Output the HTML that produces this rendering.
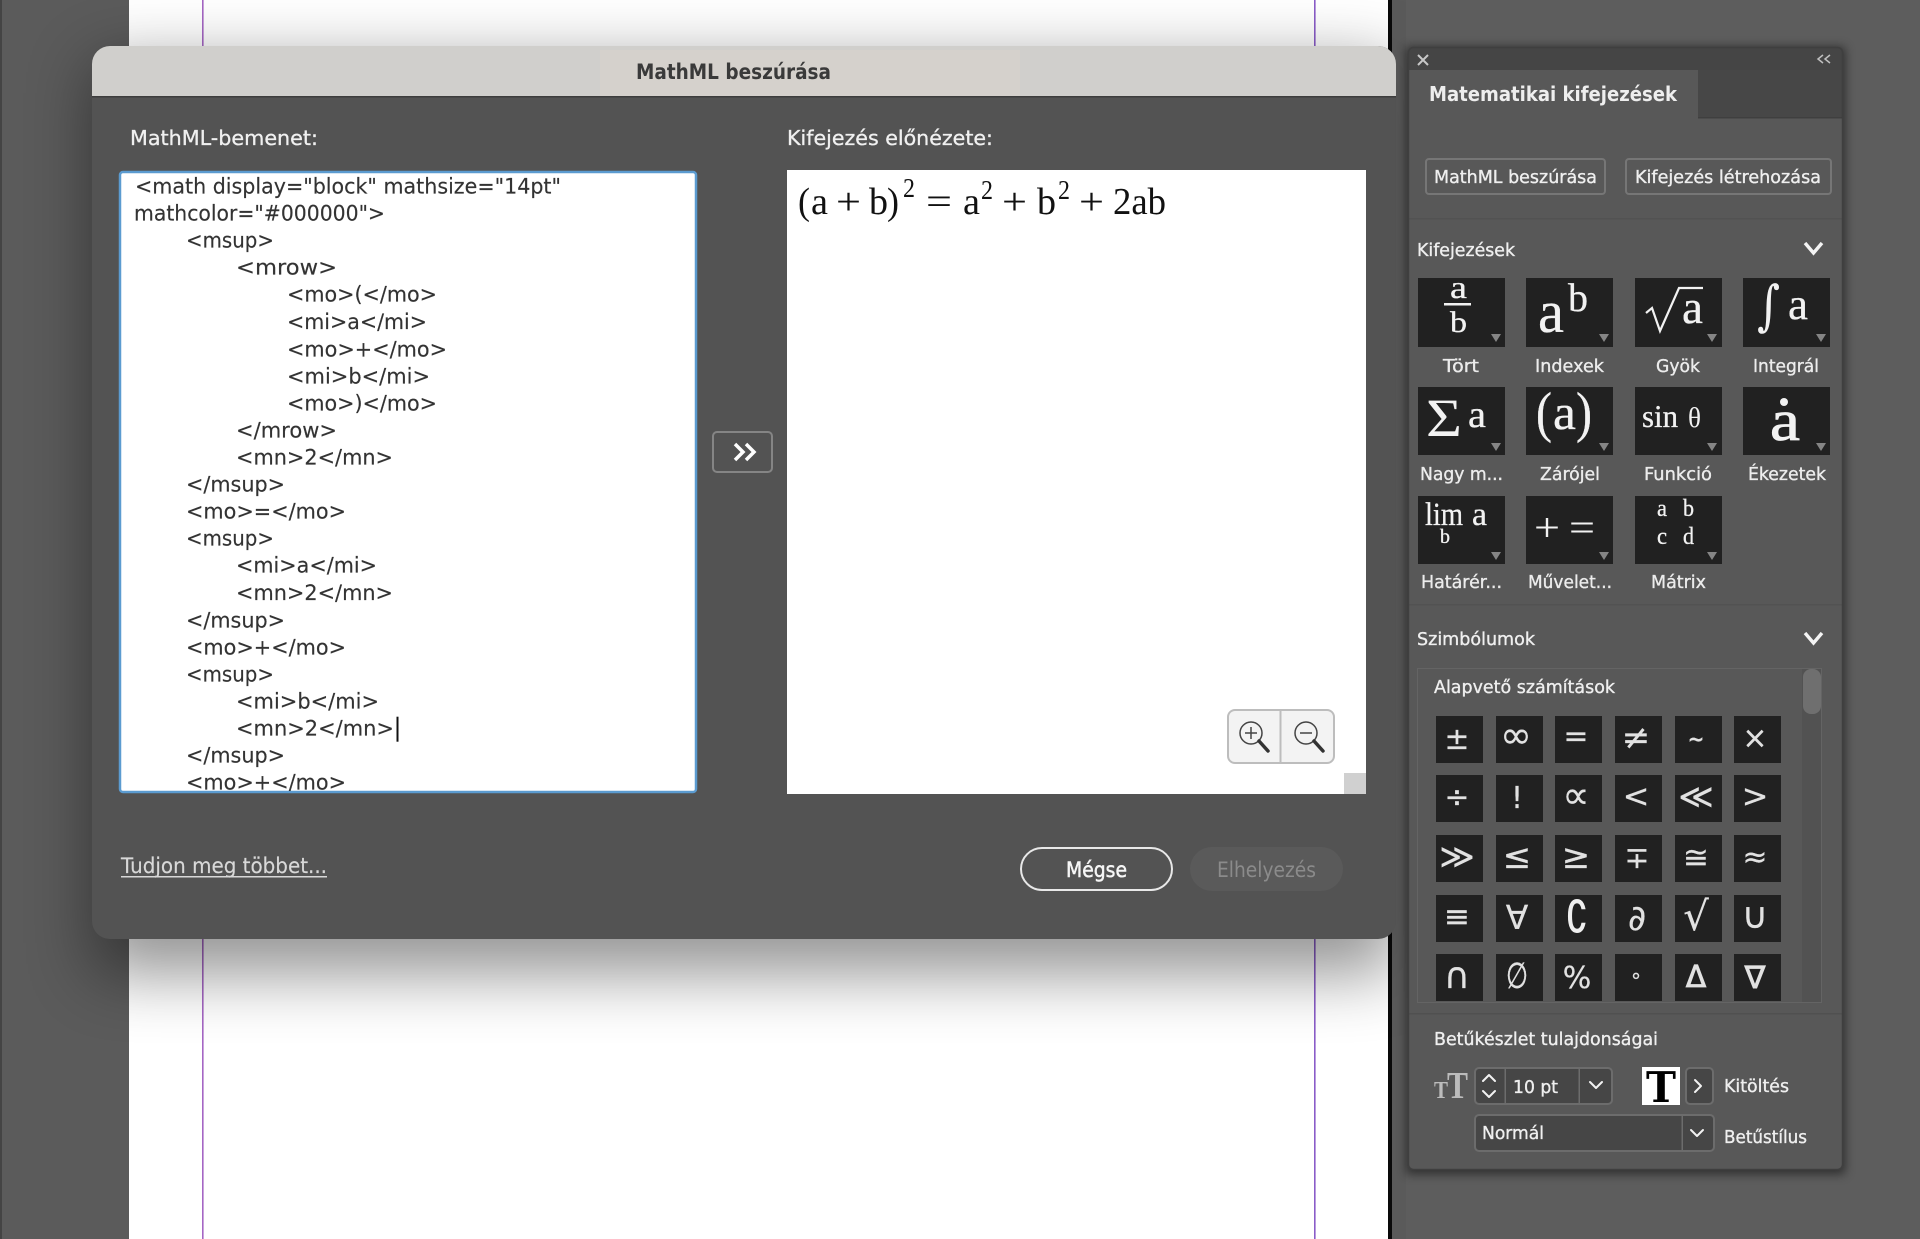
<!DOCTYPE html>
<html lang="hu"><head><meta charset="utf-8"><title>MathML beszúrása</title>
<style>
html,body{margin:0;padding:0;background:#5c5c5c;width:1920px;height:1239px;overflow:hidden}
svg{display:block}
text{font-family:"DejaVu Sans","Liberation Sans",sans-serif;white-space:pre}
.c{fill:#333;font-size:21px;stroke:#333;stroke-width:.15px}
.l{fill:#ececec;font-size:18px;stroke:#ececec;stroke-width:.35px}
.p{fill:#efefef;font-size:18px;stroke:#efefef;stroke-width:.35px}
.m{fill:#111;font-family:"Liberation Serif",serif;font-size:38px}
.w{fill:#f2f2f2;font-family:"Liberation Serif",serif;stroke:#f2f2f2;stroke-width:.3px}
.y{fill:#e2e2e2;font-size:30px;text-anchor:middle;stroke:#e2e2e2;stroke-width:.2px}
.ch{fill:none;stroke:#f2f2f2;stroke-width:2;stroke-linecap:round;stroke-linejoin:round}
.h{font-size:20px;fill:#f0f0f0;stroke:#f0f0f0;stroke-width:.3px}
</style></head><body>
<svg width="1920" height="1239" viewBox="0 0 1920 1239" xmlns="http://www.w3.org/2000/svg">
<defs>
<filter id="b1" x="-20%" y="-20%" width="140%" height="140%"><feGaussianBlur stdDeviation="33"/></filter>
<filter id="b2" x="-20%" y="-20%" width="140%" height="140%"><feGaussianBlur stdDeviation="5"/></filter>
<clipPath id="ta"><rect x="121" y="173" width="574" height="618"/></clipPath>
<clipPath id="dlg"><rect x="92" y="46" width="1304" height="893" rx="18"/></clipPath>
<clipPath id="pn"><rect x="1408" y="47" width="435" height="1123" rx="5"/></clipPath>
</defs>
<!-- background -->
<rect width="1920" height="1239" fill="#5e5e5e"/>
<rect x="0" width="129" height="1239" fill="#5b5b5b"/>
<rect x="0" width="2" height="1239" fill="#444"/>
<rect x="129" width="1259" height="1239" fill="#fff"/>
<rect x="202" width="1.6" height="1239" fill="#a566c4"/>
<rect x="1314" width="1.6" height="1239" fill="#8a5cc8"/>
<rect x="1388" width="4" height="1239" fill="#0a0a0a"/>
<rect x="1392" width="14" height="1239" fill="#4f4f4f"/>
<!-- dialog shadow -->
<rect x="92" y="62" width="1304" height="912" fill="#000" opacity=".42" filter="url(#b1)"/>
<rect x="1392" width="528" height="1239" fill="#5e5e5e" opacity=".75"/>
<!-- dialog -->
<g clip-path="url(#dlg)">
<rect x="92" y="46" width="1304" height="893" fill="#535353"/>
<rect x="92" y="46" width="1304" height="50" fill="#d0cfcc"/>
<rect x="600" y="50" width="420" height="46" fill="#d5d1cc"/>
<rect x="92" y="96" width="1304" height="1.5" fill="#3d3d3d"/>
</g>
<text x="636" y="79" textLength="195" lengthAdjust="spacingAndGlyphs" style="font-size:21px;font-weight:bold;fill:#3a3a3a">MathML beszúrása</text>
<text class="h" x="130" y="145" textLength="188" lengthAdjust="spacingAndGlyphs">MathML-bemenet:</text>
<text class="h" x="787" y="145" textLength="206" lengthAdjust="spacingAndGlyphs">Kifejezés előnézete:</text>
<!-- textarea -->
<rect x="120" y="172" width="576" height="620" rx="3" fill="#fff" stroke="#5b9bd0" stroke-width="2.5"/>
<g clip-path="url(#ta)"><g transform="translate(0,.7)">
<text class="c" x="135" y="193" textLength="426" lengthAdjust="spacingAndGlyphs">&lt;math display="block" mathsize="14pt"</text>
<text class="c" x="134" y="220" textLength="251" lengthAdjust="spacingAndGlyphs">mathcolor="#000000"&gt;</text>
<text class="c" x="186" y="247" textLength="88" lengthAdjust="spacingAndGlyphs">&lt;msup&gt;</text>
<text class="c" x="236" y="274" textLength="101" lengthAdjust="spacingAndGlyphs">&lt;mrow&gt;</text>
<text class="c" x="287" y="301" textLength="150" lengthAdjust="spacingAndGlyphs">&lt;mo&gt;(&lt;/mo&gt;</text>
<text class="c" x="287" y="328.5" textLength="140" lengthAdjust="spacingAndGlyphs">&lt;mi&gt;a&lt;/mi&gt;</text>
<text class="c" x="287" y="356" textLength="160" lengthAdjust="spacingAndGlyphs">&lt;mo&gt;+&lt;/mo&gt;</text>
<text class="c" x="287" y="383" textLength="143" lengthAdjust="spacingAndGlyphs">&lt;mi&gt;b&lt;/mi&gt;</text>
<text class="c" x="287" y="410" textLength="150" lengthAdjust="spacingAndGlyphs">&lt;mo&gt;)&lt;/mo&gt;</text>
<text class="c" x="236" y="437" textLength="101" lengthAdjust="spacingAndGlyphs">&lt;/mrow&gt;</text>
<text class="c" x="236" y="464" textLength="157" lengthAdjust="spacingAndGlyphs">&lt;mn&gt;2&lt;/mn&gt;</text>
<text class="c" x="186" y="491" textLength="99" lengthAdjust="spacingAndGlyphs">&lt;/msup&gt;</text>
<text class="c" x="186" y="518" textLength="160" lengthAdjust="spacingAndGlyphs">&lt;mo&gt;=&lt;/mo&gt;</text>
<text class="c" x="186" y="545" textLength="88" lengthAdjust="spacingAndGlyphs">&lt;msup&gt;</text>
<text class="c" x="236" y="572" textLength="141" lengthAdjust="spacingAndGlyphs">&lt;mi&gt;a&lt;/mi&gt;</text>
<text class="c" x="236" y="599.5" textLength="157" lengthAdjust="spacingAndGlyphs">&lt;mn&gt;2&lt;/mn&gt;</text>
<text class="c" x="186" y="627" textLength="99" lengthAdjust="spacingAndGlyphs">&lt;/msup&gt;</text>
<text class="c" x="186" y="654" textLength="160" lengthAdjust="spacingAndGlyphs">&lt;mo&gt;+&lt;/mo&gt;</text>
<text class="c" x="186" y="681" textLength="88" lengthAdjust="spacingAndGlyphs">&lt;msup&gt;</text>
<text class="c" x="236" y="708" textLength="143" lengthAdjust="spacingAndGlyphs">&lt;mi&gt;b&lt;/mi&gt;</text>
<text class="c" x="236" y="735" textLength="158" lengthAdjust="spacingAndGlyphs">&lt;mn&gt;2&lt;/mn&gt;</text>
<rect x="396.500" y="716" width="2" height="25" fill="#111"/>
<text class="c" x="186" y="762" textLength="99" lengthAdjust="spacingAndGlyphs">&lt;/msup&gt;</text>
<text class="c" x="186" y="789" textLength="160" lengthAdjust="spacingAndGlyphs">&lt;mo&gt;+&lt;/mo&gt;</text>
</g></g>
<!-- arrow button -->
<rect x="713" y="432" width="59" height="40" rx="4" fill="#535353" stroke="#858585" stroke-width="2"/>
<path d="M735 444l8 8-8 8M746 444l8 8-8 8" fill="none" stroke="#fff" stroke-width="3.500"/>
<!-- preview -->
<rect x="787" y="170" width="579" height="624" fill="#fff"/>
<rect x="1344" y="773" width="22" height="21" fill="#d0d0d0"/>
<text class="m" x="798" y="214" textLength="12" lengthAdjust="spacingAndGlyphs">(</text>
<text class="m" x="811" y="214" textLength="17" lengthAdjust="spacingAndGlyphs">a</text>
<text class="m" x="836" y="214" textLength="25" lengthAdjust="spacingAndGlyphs">+</text>
<text class="m" x="869" y="214" textLength="19" lengthAdjust="spacingAndGlyphs">b</text>
<text class="m" x="887" y="214" textLength="12" lengthAdjust="spacingAndGlyphs">)</text>
<text class="m" style="font-size:27px" x="903" y="197" textLength="12" lengthAdjust="spacingAndGlyphs">2</text>
<text class="m" x="926" y="214" textLength="26" lengthAdjust="spacingAndGlyphs">=</text>
<text class="m" x="963" y="214" textLength="17" lengthAdjust="spacingAndGlyphs">a</text>
<text class="m" style="font-size:27px" x="981" y="199" textLength="12" lengthAdjust="spacingAndGlyphs">2</text>
<text class="m" x="1002" y="214" textLength="25" lengthAdjust="spacingAndGlyphs">+</text>
<text class="m" x="1037" y="214" textLength="19" lengthAdjust="spacingAndGlyphs">b</text>
<text class="m" style="font-size:27px" x="1058" y="199" textLength="12" lengthAdjust="spacingAndGlyphs">2</text>
<text class="m" x="1079" y="214" textLength="25" lengthAdjust="spacingAndGlyphs">+</text>
<text class="m" x="1113" y="214" textLength="53" lengthAdjust="spacingAndGlyphs">2ab</text>
<!-- zoom controls -->
<rect x="1228" y="710" width="106" height="53" rx="7" fill="#f3f3f3" stroke="#bdbdbd" stroke-width="2"/>
<rect x="1279.500" y="710" width="2" height="53" fill="#bdbdbd"/>
<g fill="none" stroke="#444" stroke-width="1.500">
<circle cx="1251" cy="733" r="11"/><path d="M1245 733h12M1251 727v12"/>
<circle cx="1306" cy="733" r="11"/><path d="M1300 733h12"/>
</g>
<path d="M1259 741l9 10M1314 741l9 10" stroke="#333" stroke-width="3.500" stroke-linecap="round"/>
<!-- footer -->
<text x="121" y="873" textLength="206" lengthAdjust="spacingAndGlyphs" style="font-size:21px;fill:#d8d8d8;stroke:#d8d8d8;stroke-width:.15px">Tudjon meg többet...</text>
<rect x="121" y="876" width="206" height="1.500" fill="#d8d8d8"/>
<rect x="1021" y="848" width="151" height="42" rx="21" fill="#535353" stroke="#e8e8e8" stroke-width="2"/>
<text x="1066" y="877" textLength="61" lengthAdjust="spacingAndGlyphs" style="font-size:21px;fill:#f6f6f6;stroke:#f6f6f6;stroke-width:.5px">Mégse</text>
<rect x="1190" y="847" width="153" height="44" rx="22" fill="#5a5a5a"/>
<text x="1217" y="877" textLength="99" lengthAdjust="spacingAndGlyphs" style="font-size:21px;fill:#8b8b8b">Elhelyezés</text>

<!-- panel -->
<rect x="1406" y="47" width="439" height="1127" fill="#000" opacity=".5" filter="url(#b2)"/>
<g clip-path="url(#pn)">
<rect x="1408" y="47" width="435" height="1123" fill="#585858"/>
<rect x="1408" y="47" width="435" height="23" fill="#454545"/>
<rect x="1698" y="70" width="145" height="48" fill="#474747"/>
<rect x="1698" y="117" width="145" height="1.500" fill="#3f3f3f"/>
<rect x="1408" y="218" width="435" height="1.500" fill="#525252"/>
<rect x="1408" y="604" width="435" height="1.500" fill="#525252"/>
<rect x="1408" y="1013" width="435" height="1.500" fill="#505050"/>
</g>
<rect x="1408.500" y="47.500" width="434" height="1122" rx="5" fill="none" stroke="#3f3f3f" stroke-width="1.500"/>
<path d="M1418 55l10 10M1428 55l-10 10" stroke="#c8c8c8" stroke-width="2" fill="none"/>
<path d="M1823 55l-5 4 5 4M1830 55l-5 4 5 4" stroke="#c0c0c0" stroke-width="1.500" fill="none"/>
<text x="1429" y="101" textLength="248" lengthAdjust="spacingAndGlyphs" style="font-size:20px;font-weight:bold;fill:#eee">Matematikai kifejezések</text>
<rect x="1426" y="159" width="179" height="35" rx="3" fill="none" stroke="#767676" stroke-width="2"/>
<text class="p" x="1434" y="183" textLength="163" lengthAdjust="spacingAndGlyphs">MathML beszúrása</text>
<rect x="1626" y="159" width="205" height="35" rx="3" fill="none" stroke="#767676" stroke-width="2"/>
<text class="p" x="1635" y="183" textLength="186" lengthAdjust="spacingAndGlyphs">Kifejezés létrehozása</text>
<text class="p" x="1417" y="256" textLength="98" lengthAdjust="spacingAndGlyphs">Kifejezések</text>
<path d="M1805 243l8.500 10 8.500-10" fill="none" stroke="#f4f4f4" stroke-width="3.400"/>

<!-- expression tiles -->
<g fill="#212121">
<rect x="1418" y="278" width="87" height="69"/><rect x="1526" y="278" width="87" height="69"/><rect x="1635" y="278" width="87" height="69"/><rect x="1743" y="278" width="87" height="69"/>
<rect x="1418" y="387" width="87" height="68"/><rect x="1526" y="387" width="87" height="68"/><rect x="1635" y="387" width="87" height="68"/><rect x="1743" y="387" width="87" height="68"/>
<rect x="1418" y="496" width="87" height="68"/><rect x="1526" y="496" width="87" height="68"/><rect x="1635" y="496" width="87" height="68"/>
</g>
<g fill="#858585">
<path d="M1491 334h10l-5 8zM1599 334h10l-5 8zM1707 334h10l-5 8zM1816 334h10l-5 8z"/>
<path d="M1491 443h10l-5 8zM1599 443h10l-5 8zM1707 443h10l-5 8zM1816 443h10l-5 8z"/>
<path d="M1491 552h10l-5 8zM1599 552h10l-5 8zM1707 552h10l-5 8z"/>
</g>
<!-- Tört -->
<text class="w" x="1450" y="298" textLength="17" lengthAdjust="spacingAndGlyphs" style="font-size:32px">a</text>
<rect x="1444" y="303" width="27" height="2.500" fill="#f2f2f2"/>
<text class="w" x="1450" y="332" textLength="17" lengthAdjust="spacingAndGlyphs" style="font-size:30px">b</text>
<!-- Indexek -->
<text class="w" x="1538" y="332" textLength="26" lengthAdjust="spacingAndGlyphs" style="font-size:60px">a</text>
<text class="w" x="1568" y="311" textLength="20" lengthAdjust="spacingAndGlyphs" style="font-size:40px">b</text>
<!-- Gyök -->
<path d="M1646 313l6-5 8 23 19-43h24" fill="none" stroke="#f2f2f2" stroke-width="2.200"/>
<text class="w" x="1682" y="323" textLength="21" lengthAdjust="spacingAndGlyphs" style="font-size:48px">a</text>
<!-- Integrál -->
<text class="w" x="1757" y="324" textLength="23" lengthAdjust="spacingAndGlyphs" style="font-size:54px;font-family:'DejaVu Serif',serif;stroke-width:0">∫</text>
<text class="w" x="1788" y="319" textLength="20" lengthAdjust="spacingAndGlyphs" style="font-size:44px">a</text>
<!-- Nagy műveletek -->
<text class="w" x="1426" y="436" textLength="36" lengthAdjust="spacingAndGlyphs" style="font-size:54px;stroke-width:0">Σ</text>
<text class="w" x="1468" y="427" textLength="18" lengthAdjust="spacingAndGlyphs" style="font-size:38px">a</text>
<!-- Zárójel -->
<text class="w" x="1536" y="431" textLength="16" lengthAdjust="spacingAndGlyphs" style="font-size:56px">(</text>
<text class="w" x="1553" y="429" textLength="23" lengthAdjust="spacingAndGlyphs" style="font-size:50px">a</text>
<text class="w" x="1576" y="431" textLength="16" lengthAdjust="spacingAndGlyphs" style="font-size:56px">)</text>
<!-- Funkció -->
<text class="w" x="1642" y="427" textLength="36" lengthAdjust="spacingAndGlyphs" style="font-size:32px">sin</text>
<text class="w" x="1688" y="427" textLength="13" lengthAdjust="spacingAndGlyphs" style="font-size:29px;stroke-width:0">θ</text>
<!-- Ékezetek -->
<circle cx="1784" cy="402" r="4" fill="#f2f2f2"/>
<text class="w" x="1770" y="440" textLength="30" lengthAdjust="spacingAndGlyphs" style="font-size:58px;stroke-width:.8px">a</text>
<!-- Határérték -->
<text class="w" x="1425" y="525" textLength="38" lengthAdjust="spacingAndGlyphs" style="font-size:33px">lim</text>
<text class="w" x="1472" y="525" textLength="15" lengthAdjust="spacingAndGlyphs" style="font-size:33px">a</text>
<text class="w" x="1440" y="543" textLength="10" lengthAdjust="spacingAndGlyphs" style="font-size:20px">b</text>
<!-- Műveletek -->
<text class="w" x="1534" y="541" textLength="26" lengthAdjust="spacingAndGlyphs" style="font-size:40px;stroke-width:0">+</text>
<text class="w" x="1569" y="541" textLength="26" lengthAdjust="spacingAndGlyphs" style="font-size:40px;stroke-width:0">=</text>
<!-- Mátrix -->
<text class="w" x="1657" y="516" textLength="10" lengthAdjust="spacingAndGlyphs" style="font-size:24px">a</text>
<text class="w" x="1683" y="516" textLength="11" lengthAdjust="spacingAndGlyphs" style="font-size:24px">b</text>
<text class="w" x="1657" y="544" textLength="10" lengthAdjust="spacingAndGlyphs" style="font-size:24px">c</text>
<text class="w" x="1683" y="544" textLength="11" lengthAdjust="spacingAndGlyphs" style="font-size:24px">d</text>

<!-- labels -->
<text class="l" x="1443" y="372" textLength="36" lengthAdjust="spacingAndGlyphs">Tört</text>
<text class="l" x="1535" y="372" textLength="69" lengthAdjust="spacingAndGlyphs">Indexek</text>
<text class="l" x="1656" y="372" textLength="44" lengthAdjust="spacingAndGlyphs">Gyök</text>
<text class="l" x="1753" y="372" textLength="66" lengthAdjust="spacingAndGlyphs">Integrál</text>
<text class="l" x="1420" y="480" textLength="83" lengthAdjust="spacingAndGlyphs">Nagy m...</text>
<text class="l" x="1540" y="480" textLength="60" lengthAdjust="spacingAndGlyphs">Zárójel</text>
<text class="l" x="1644" y="480" textLength="68" lengthAdjust="spacingAndGlyphs">Funkció</text>
<text class="l" x="1748" y="480" textLength="78" lengthAdjust="spacingAndGlyphs">Ékezetek</text>
<text class="l" x="1421" y="588" textLength="81" lengthAdjust="spacingAndGlyphs">Határér...</text>
<text class="l" x="1528" y="588" textLength="84" lengthAdjust="spacingAndGlyphs">Művelet...</text>
<text class="l" x="1651" y="588" textLength="55" lengthAdjust="spacingAndGlyphs">Mátrix</text>

<!-- symbols -->
<text class="p" x="1417" y="645" textLength="118" lengthAdjust="spacingAndGlyphs">Szimbólumok</text>
<path d="M1805 633l8.500 10 8.500-10" fill="none" stroke="#f4f4f4" stroke-width="3.400"/>
<rect x="1417.500" y="668.500" width="404" height="334" fill="none" stroke="#646464"/>
<rect x="1802" y="669" width="19" height="333" fill="#525252"/>
<rect x="1803" y="669" width="18" height="45" rx="8" fill="#6f6f6f"/>
<text class="p" x="1434" y="693" textLength="181" lengthAdjust="spacingAndGlyphs">Alapvető számítások</text>
<g fill="#212121">
<rect x="1436" y="716" width="47" height="47"/><rect x="1496" y="716" width="47" height="47"/><rect x="1555" y="716" width="47" height="47"/><rect x="1615" y="716" width="47" height="47"/><rect x="1675" y="716" width="47" height="47"/><rect x="1734" y="716" width="47" height="47"/>
<rect x="1436" y="775" width="47" height="47"/><rect x="1496" y="775" width="47" height="47"/><rect x="1555" y="775" width="47" height="47"/><rect x="1615" y="775" width="47" height="47"/><rect x="1675" y="775" width="47" height="47"/><rect x="1734" y="775" width="47" height="47"/>
<rect x="1436" y="835" width="47" height="47"/><rect x="1496" y="835" width="47" height="47"/><rect x="1555" y="835" width="47" height="47"/><rect x="1615" y="835" width="47" height="47"/><rect x="1675" y="835" width="47" height="47"/><rect x="1734" y="835" width="47" height="47"/>
<rect x="1436" y="895" width="47" height="47"/><rect x="1496" y="895" width="47" height="47"/><rect x="1555" y="895" width="47" height="47"/><rect x="1615" y="895" width="47" height="47"/><rect x="1675" y="895" width="47" height="47"/><rect x="1734" y="895" width="47" height="47"/>
<rect x="1436" y="954" width="47" height="47"/><rect x="1496" y="954" width="47" height="47"/><rect x="1555" y="954" width="47" height="47"/><rect x="1615" y="954" width="47" height="47"/><rect x="1675" y="954" width="47" height="47"/><rect x="1734" y="954" width="47" height="47"/>
</g>
<text class="y" x="1457" y="749">±</text><text class="y" x="1516" y="748" style="font-size:38px">∞</text><text class="y" x="1576" y="746">=</text><text class="y" x="1636" y="749" style="font-size:34px">≠</text><text class="y" x="1696" y="746" style="font-size:20px;font-weight:bold">~</text><text class="y" x="1755" y="748" style="font-size:30px">×</text>
<text class="y" x="1457" y="807">÷</text><text class="y" x="1517" y="808" style="font-size:30px">!</text><text class="y" x="1576" y="808" style="font-size:38px">∝</text><text class="y" x="1636" y="807" style="font-size:32px">&lt;</text><text class="y" x="1696" y="808" style="font-size:34px">≪</text><text class="y" x="1755" y="807" style="font-size:32px">&gt;</text>
<text class="y" x="1457" y="868" style="font-size:34px">≫</text><text class="y" x="1517" y="868" style="font-size:34px">≤</text><text class="y" x="1576" y="868" style="font-size:34px">≥</text><text class="y" x="1637" y="868">∓</text><text class="y" x="1696" y="868" style="font-size:31px">≅</text><text class="y" x="1755" y="867">≈</text>
<text class="y" x="1457" y="927" style="font-size:31px">≡</text><text class="y" x="1517" y="929" style="font-size:33px">∀</text><text x="1566" y="932" textLength="22" lengthAdjust="spacingAndGlyphs" style="font-size:44px;fill:#efefef;stroke:#efefef;stroke-width:.8px">∁</text><text class="y" x="1637" y="930" style="font-size:35px">∂</text><text class="y" x="1696" y="930" style="font-size:40px">√</text><text class="y" x="1755" y="928" style="font-size:36px">∪</text>
<text class="y" x="1457" y="988" style="font-size:36px">∩</text><text x="1506" y="988" textLength="22" lengthAdjust="spacingAndGlyphs" style="font-size:36px;fill:#e2e2e2;stroke:#e2e2e2;stroke-width:.4px">∅</text><text class="y" x="1577" y="988" style="font-size:30px">%</text><text class="y" x="1636" y="988" style="font-size:20px">°</text><text class="y" x="1696" y="987" style="font-size:30px;stroke-width:.8px">Δ</text><text class="y" x="1755" y="988" style="font-size:31px;stroke-width:.8px">∇</text>

<!-- font props -->
<text class="p" x="1434" y="1045" textLength="224" lengthAdjust="spacingAndGlyphs">Betűkészlet tulajdonságai</text>
<text x="1434" y="1098" textLength="14" lengthAdjust="spacingAndGlyphs" style="font-family:'Liberation Serif',serif;font-weight:bold;font-size:24px;fill:#bcbcbc">T</text>
<text x="1447" y="1098" textLength="21" lengthAdjust="spacingAndGlyphs" style="font-family:'Liberation Serif',serif;font-weight:bold;font-size:38px;fill:#bcbcbc">T</text>
<rect x="1475" y="1068" width="137" height="36" rx="4" fill="#464646" stroke="#6c6c6c" stroke-width="2"/>
<rect x="1504.500" y="1068" width="1.500" height="36" fill="#6c6c6c"/>
<rect x="1578.500" y="1068" width="1.500" height="36" fill="#6c6c6c"/>
<path class="ch" d="M1483 1081l6-6 6 6M1483 1091l6 6 6-6M1590 1082l6 6 6-6"/>
<text class="p" x="1513" y="1093" textLength="45" lengthAdjust="spacingAndGlyphs">10 pt</text>
<rect x="1642" y="1067" width="38" height="38" fill="#fff"/>
<text x="1646" y="1102" textLength="30" lengthAdjust="spacingAndGlyphs" style="font-family:'DejaVu Serif',serif;font-weight:bold;font-size:42px;fill:#000">T</text>
<rect x="1686" y="1068" width="27" height="36" rx="4" fill="#464646" stroke="#6c6c6c" stroke-width="2"/>
<path class="ch" d="M1695 1080l6 6-6 6"/>
<text class="p" x="1724" y="1092" textLength="65" lengthAdjust="spacingAndGlyphs">Kitöltés</text>
<rect x="1475" y="1115" width="239" height="36" rx="4" fill="#464646" stroke="#6c6c6c" stroke-width="2"/>
<rect x="1681.500" y="1115" width="1.500" height="36" fill="#6c6c6c"/>
<path class="ch" d="M1691 1130l6 6 6-6"/>
<text class="p" x="1482" y="1139" textLength="62" lengthAdjust="spacingAndGlyphs">Normál</text>
<text class="p" x="1724" y="1143" textLength="83" lengthAdjust="spacingAndGlyphs">Betűstílus</text>
</svg>
</body></html>
